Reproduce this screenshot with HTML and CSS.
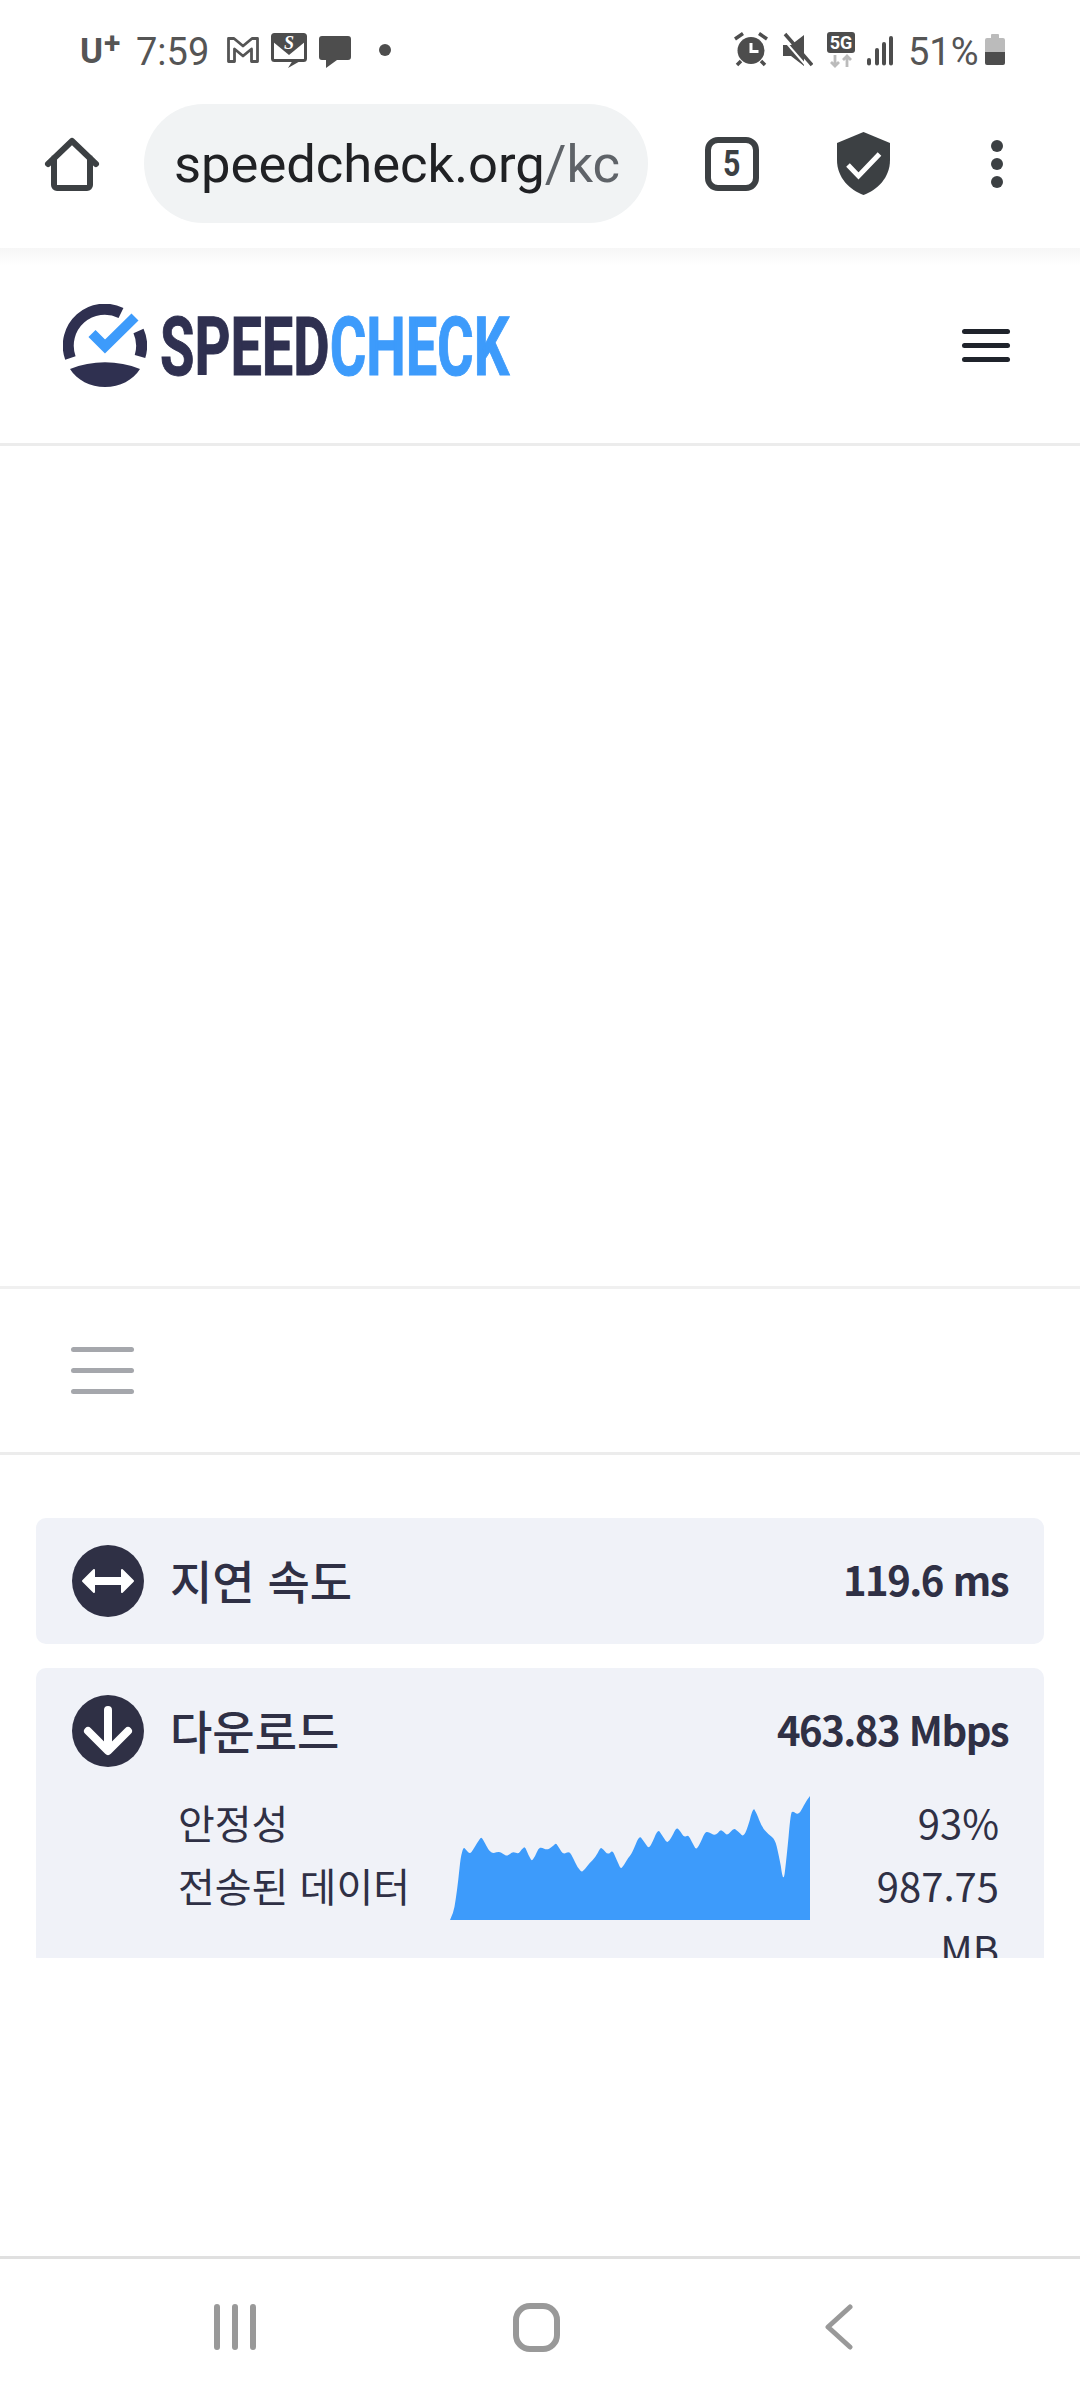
FILE: index.html
```html
<!DOCTYPE html>
<html lang="ko">
<head>
<meta charset="utf-8">
<title>SpeedCheck</title>
<link rel="stylesheet" href="styles.css">
</head>
<body>

<div class="status">
	<span class="carrier">U<sup>+</sup></span>
	<span class="time">7:59</span>
	<svg class="ic_gmail" width="32" height="40" viewBox="227 30 32 40"><path d="M228.5 61.5V38.5h5.5l9 7.5 9-7.5h5.5v23h-6V49l-8.500 7-8.500-7v12.500z" fill="#fff" stroke="#555" stroke-width="2.8" stroke-linejoin="round"/></svg>
	<svg class="ic_mail" width="36" height="40" viewBox="271 30 36 40">
		<rect x="272.5" y="34.5" width="33" height="26" rx="2" fill="#fff" stroke="#4d4d4d" stroke-width="3"/>
		<path d="M272 34h34v7l-17 14-17-14z" fill="#4d4d4d"/>
		<path d="M293 60h9l-14 8z" fill="#4d4d4d"/>
		<text x="289" y="49" text-anchor="middle" class="mail_s">S</text>
	</svg>
	<svg class="ic_chat" width="32" height="40" viewBox="319 30 32 40"><path d="M322 36h26a3 3 0 0 1 3 3v18a3 3 0 0 1-3 3h-11l-11 8v-8h-4a3 3 0 0 1-3-3v-18a3 3 0 0 1 3-3z" fill="#4d4d4d"/></svg>
	<i class="status_dot"></i>
	<span class="status_gap"></span>
	<svg class="ic_alarm" width="34" height="40" viewBox="734 30 34 40">
		<circle cx="751" cy="50.5" r="13.5" fill="#4d4d4d"/>
		<path d="M735 39l8-5.500M759 33.500l8 5.500M741 61l-4 4M761 61l4 4" stroke="#4d4d4d" stroke-width="3.5" fill="none"/>
		<path d="M751 43v8.500h7.500" stroke="#fff" stroke-width="3" fill="none"/>
	</svg>
	<svg class="ic_mute" width="30" height="40" viewBox="783 30 30 40">
		<path d="M783 45h8l13-10v31l-13-10h-8z" fill="#4d4d4d"/>
		<path d="M783 39l26 30" stroke="#fff" stroke-width="2" fill="none"/>
		<path d="M785 34l27 31" stroke="#4d4d4d" stroke-width="3.5" fill="none"/>
	</svg>
	<svg class="ic_5g" width="28" height="40" viewBox="827 30 28 40">
		<rect x="827" y="32" width="28" height="21" rx="3" fill="#4d4d4d"/>
		<text x="841" y="49" text-anchor="middle" class="five_g">5G</text>
		<path d="M835 55v11M831 62l4 4 4-4M847 67v-11M843 60l4-4 4 4" stroke="#bbb" stroke-width="2.8" fill="none"/>
	</svg>
	<svg class="ic_signal" width="27" height="40" viewBox="867 30 27 40"><path d="M869 60v3.500M877 50v13.500M884 44v19.500M891 38v25.500" stroke="#4d4d4d" stroke-width="4" stroke-linecap="round" fill="none"/></svg>
	<span class="battery_pct">51%</span>
	<svg class="ic_battery" width="20" height="40" viewBox="985 30 20 40">
		<path d="M992 34h6a1 1 0 0 1 1 1v3h4a2 2 0 0 1 2 2v12h-20v-12a2 2 0 0 1 2-2h4v-3a1 1 0 0 1 1-1z" fill="#bbb"/>
		<path d="M985 52h20v11a2 2 0 0 1-2 2h-16a2 2 0 0 1-2-2z" fill="#4d4d4d"/>
	</svg>
</div>

<div class="toolbar">
	<svg class="ic_home" width="56" height="60" viewBox="44 134 56 60">
		<path d="M48 164l24-23 24 23M54 158v27a3 3 0 0 0 3 3h30a3 3 0 0 0 3-3v-27" fill="none" stroke="#3c4043" stroke-width="6" stroke-linecap="round" stroke-linejoin="round"/>
	</svg>
	<div class="url_pill"><span class="url_host">speedcheck.org</span><span class="url_path">/kc</span></div>
	<div class="tab_count"><span>5</span></div>
	<svg class="ic_shield" width="54" height="64" viewBox="837 132 54 64">
		<path d="M863.5 132l26.500 11v17c0 18-13 30-26.500 35-13.500-5-26.500-17-26.500-35v-17z" fill="#3c4043"/>
		<path d="M848 165l10.500 11 21-22" fill="none" stroke="#fff" stroke-width="5"/>
	</svg>
	<div class="kebab"><i></i><i></i><i></i></div>
</div>
<div class="toolbar_shadow"></div>

<div class="site_header">
	<svg class="logo_mark" width="84" height="84" viewBox="63 304 84 84">
		<path d="M70.4 358A36.5 36.5 0 0 1 121 313" fill="none" stroke="#2f3050" stroke-width="11"/>
		<path d="M138.5 331A36.5 36.5 0 0 1 140 356.5" fill="none" stroke="#2f3050" stroke-width="11"/>
		<path d="M70 369c22-9 48-9 70 0-7 11-20 18-35 18s-28-7-35-18z" fill="#2f3050"/>
		<path d="M92 333.5l13 13 30-29.500" fill="none" stroke="#3d9bfb" stroke-width="10"/>
	</svg>
	<div class="logo_text"><span class="logo_speed">SPEED</span><span class="logo_check">CHECK</span></div>
	<div class="burger"><i></i><i></i><i></i></div>
</div>

<div class="ad_slot"></div>

<div class="sub_menu">
	<div class="sub_burger"><i></i><i></i><i></i></div>
</div>

<div class="results">
	<div class="card card_latency">
		<div class="card_head">
			<svg class="card_icon" width="72" height="72" viewBox="0 0 72 72">
				<circle cx="36" cy="36" r="36" fill="#2f3045"/>
				<path d="M11 36l11-11v8h28v-8l11 11-11 11v-8h-28v8z" fill="#fff" stroke="#fff" stroke-width="2" stroke-linejoin="round"/>
			</svg>
			<span class="card_title">지연 속도</span>
			<span class="card_value">119.6 ms</span>
		</div>
	</div>
	<div class="card card_download">
		<div class="card_head">
			<svg class="card_icon" width="72" height="72" viewBox="0 0 72 72">
				<circle cx="36" cy="36" r="36" fill="#2f3045"/>
				<path d="M36 15v40M16 36l20 20 20-20" fill="none" stroke="#fff" stroke-width="8" stroke-linecap="round" stroke-linejoin="round"/>
			</svg>
			<span class="card_title">다운로드</span>
			<span class="card_value">463.83 Mbps</span>
		</div>
		<div class="card_detail">
			<div class="detail_labels">
				<div>안정성</div>
				<div>전송된 데이터</div>
			</div>
			<svg class="chart" width="360" height="124" viewBox="30 48 1080 372" preserveAspectRatio="none">
				<path fill="#3d9bfb" d="M30 420Q40 400 43.5 380Q47 360 51 330Q55 300 58.5 265Q62 230 66 217.5Q70 200 74 205Q78 210 84 216Q90 222 95 215Q100 208 106 198Q112 188 117 181Q122 170 126 175Q130 180 135 190Q140 200 145 207.5Q150 215 155 217.5Q160 220 169 217Q178 214 184 218Q190 222 195 225Q200 228 205 225Q210 222 215 218.5Q220 215 227.5 218.5Q235 222 240 215Q245 208 250 204Q255 196 260 212.5Q265 225 270 233.5Q275 246 280 236Q285 230 290 217.5Q295 205 300 203.5Q305 202 312.5 206Q320 210 327.5 206Q335 202 341.5 196Q348 186 353 197.5Q358 205 364 214.5Q370 224 379 218.5Q388 213 394 224Q400 235 406 248.5Q412 262 418.5 268.5Q425 279 430 271.5Q435 268 442.5 257.5Q450 247 457.5 240.5Q465 234 473.5 218.5Q482 199 486 205.5Q490 208 496.5 216Q503 224 510.5 218Q518 208 524 226Q530 240 536 253Q542 270 547 261Q552 256 558.5 244Q565 232 570 227Q575 222 586.5 194Q598 162 605 175.5Q612 185 618.5 194Q625 205 628.5 200.5Q632 198 643 173Q654 144 660 156.5Q666 165 673 176.5Q680 190 685 184Q690 180 700 161Q710 138 716 148.5Q722 155 727 163.500Q732 172 738.5 168.5Q745 165 750 175Q755 185 761.5 196.5Q768 212 773 201.5Q778 195 786.5 176Q795 155 800 156Q805 155 815 161.5Q825 168 833.5 159Q842 147 846 152.5Q850 155 856 160.5Q862 168 872 155.5Q882 142 888.5 150Q895 155 901.5 161.5Q908 170 913 163Q918 158 929 121.5Q940 76 945 92.5Q950 100 957.5 120Q965 140 975 151.5Q985 163 995 170.5Q1005 178 1010 199Q1015 220 1022.5 258Q1030 318 1035 272Q1040 230 1046 167Q1052 96 1056 96Q1060 94 1066 99Q1072 103 1077 99Q1082 95 1091 77Q1100 60 1110 48V420Z"/>
			</svg>
			<div class="detail_values">
				<div>93%</div>
				<div>987.75 MB</div>
			</div>
		</div>
	</div>
</div>

<div class="nav_bar">
	<svg class="nav_recent" width="44" height="46" viewBox="0 0 44 46"><path d="M3 3v40M21 3v40M39 3v40" stroke="#999" stroke-width="6" stroke-linecap="round" fill="none"/></svg>
	<div class="nav_home"></div>
	<svg class="nav_back" width="28" height="46" viewBox="0 0 28 46"><path d="M25 3l-22 20 22 20" stroke="#999" stroke-width="5" stroke-linecap="round" stroke-linejoin="round" fill="none"/></svg>
</div>

</body>
</html>
```
FILE: styles.css
```css
*{box-sizing:border-box;}
html,body{margin:0;padding:0;}
body{width:1080px;height:2400px;background:#fff;display:flex;flex-direction:column;overflow:hidden;font-family:Roboto,"Noto Sans CJK KR",sans-serif;}
svg{display:block;flex:none;}
i{display:block;}

.status{height:100px;display:flex;align-items:center;padding:0 75px 0 80px;color:#555;}
.carrier{font-size:35px;font-weight:700;width:39px;line-height:40px;position:relative;top:2px;}
.carrier sup{font-size:30px;line-height:0;vertical-align:10px;margin-left:1px;}
.time{font-size:38px;margin-left:17px;width:73px;position:relative;top:2px;}
.ic_gmail{margin-left:18px;}
.ic_mail{margin-left:12px;}
.ic_chat{margin-left:12px;}
.status_dot{width:12px;height:12px;border-radius:50%;background:#4d4d4d;margin-left:28px;}
.status_gap{flex:1;}
.ic_mute{margin-left:15px;}
.ic_5g{margin-left:14px;}
.ic_signal{margin-left:12px;}
.battery_pct{font-size:38px;margin-left:14px;width:77px;position:relative;top:2px;white-space:nowrap;}
.mail_s{font:italic 700 18px "Liberation Serif",serif;fill:#fff;}
.five_g{font:700 18px Roboto,sans-serif;fill:#fff;}

.toolbar{height:148px;display:flex;align-items:center;padding:0 0 21px 44px;}
.url_pill{width:504px;height:119px;margin-left:44px;border-radius:60px;background:#f1f3f4;padding-left:30px;padding-right:30px;display:flex;align-items:center;overflow:hidden;font-size:52.5px;white-space:nowrap;}
.url_host{color:#202124;}
.url_path{color:#5f6368;}
.tab_count{width:54px;height:54px;margin-left:57px;border:6px solid #3c4043;border-radius:13px;color:#3c4043;font:700 37px/41px Roboto,sans-serif;text-align:center;}
.tab_count span{display:inline-block;transform:scaleX(.82);}
.ic_shield{margin-left:78px;}
.kebab{margin-left:100px;display:flex;flex-direction:column;gap:6px;}
.kebab i{width:12px;height:12px;border-radius:50%;background:#3c4043;}
.toolbar_shadow{height:0;position:relative;}
.toolbar_shadow:after{content:"";position:absolute;left:0;right:0;top:0;height:18px;background:linear-gradient(#f6f6f6,#fff);}

.site_header{height:198px;border-bottom:3px solid #ececec;display:flex;align-items:center;padding:0 0 0 63px;position:relative;}
.logo_text{margin-left:13px;margin-top:4px;font:700 81px/84px Roboto,sans-serif;-webkit-text-stroke:1px;transform:scaleX(.69);transform-origin:left center;white-space:nowrap;width:349px;}
.logo_speed{color:#2f3050;}
.logo_check{color:#3d9bfb;}
.burger{margin-left:453px;display:flex;flex-direction:column;gap:9px;}
.burger i{width:48px;height:5px;border-radius:3px;background:#1f232b;}

.ad_slot{height:840px;}

.sub_menu{height:169px;border-top:3px solid #f0f0f0;border-bottom:3px solid #ececec;padding:58px 0 0 71px;}
.sub_burger{display:flex;flex-direction:column;gap:16px;}
.sub_burger i{width:63px;height:5px;border-radius:3px;background:#a5a7ac;}

.results{flex:1;padding:63px 36px 0;display:flex;flex-direction:column;gap:24px;}
.card{background:#f0f2f8;color:#2f3045;font-family:"Noto Sans CJK KR",sans-serif;overflow:hidden;padding:0 36px;}
.card_latency{height:126px;border-radius:10px;padding-top:27px;}
.card_download{height:290px;border-radius:10px 10px 0 0;padding-top:27px;}
.card_head{display:flex;align-items:center;height:72px;}
.card_title{font-size:46px;font-weight:500;margin-left:26px;margin-top:-4px;}
.card_value{font-size:40px;font-weight:700;letter-spacing:-1.5px;margin-left:auto;margin-top:-4px;}
.card_detail{display:flex;margin-top:24px;font-size:40px;line-height:63px;}
.detail_labels{width:378px;padding-left:106px;white-space:nowrap;}
.chart{margin-top:5px;}
.detail_values{width:153px;margin-left:36px;text-align:right;}

.nav_bar{height:144px;border-top:3px solid #e0e0e0;display:flex;align-items:center;padding:0 0 5px 214px;}
.nav_home{width:47px;height:49px;border:6px solid #999;border-radius:17px;margin-left:255px;}
.nav_back{margin-left:265px;}
```
